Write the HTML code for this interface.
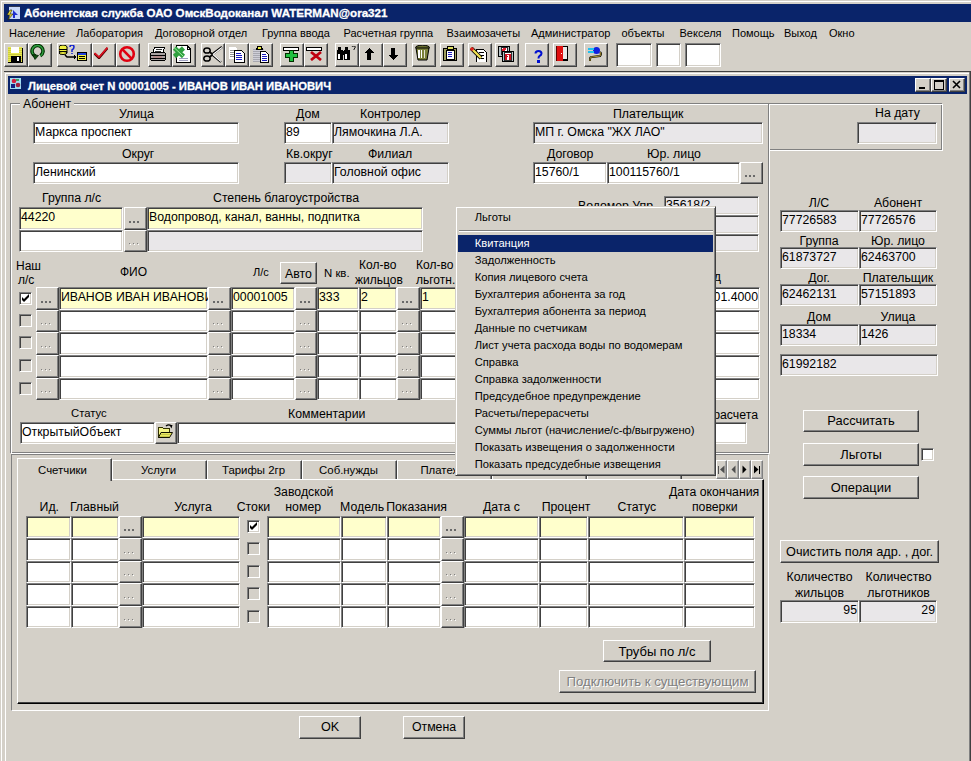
<!DOCTYPE html><html><head><meta charset="utf-8"><style>
html,body{margin:0;padding:0;width:971px;height:761px;overflow:hidden;background:#D4D0C8;position:relative;font-family:"Liberation Sans",sans-serif}
body>div,body>svg{position:absolute;box-sizing:border-box}
.t{white-space:pre;font-family:"Liberation Sans",sans-serif}
.inp{border-style:solid;border-width:1px;border-color:#808080 #fff #fff #808080;box-shadow:inset 1px 1px #404040,inset -1px -1px #D4D0C8}
.btn{background:#D4D0C8;border-style:solid;border-width:1px;border-color:#fff #404040 #404040 #fff;box-shadow:inset -1px -1px #808080}
.tb{background:#D4D0C8;border-style:solid;border-width:1px;border-color:#fff #808080 #808080 #fff}
</style></head><body>

<div style="left:1px;top:1px;width:970px;height:1px;background:#fff;"></div>
<div style="left:1px;top:1px;width:1px;height:760px;background:#fff;"></div>
<div style="left:4px;top:4px;width:967px;height:18px;background:#0A246A;"></div>
<div class="t" style="left:24px;top:7px;font-size:11.6px;line-height:11.6px;color:#fff;font-weight:bold;-webkit-text-stroke:0.3px #fff;">Абонентская служба ОАО ОмскВодоканал WATERMAN@ora321</div>
<div class="t" style="left:9px;top:28px;font-size:11px;line-height:11px;color:#000;">Население</div>
<div class="t" style="left:76px;top:28px;font-size:11px;line-height:11px;color:#000;">Лаборатория</div>
<div class="t" style="left:155px;top:28px;font-size:11px;line-height:11px;color:#000;">Договорной отдел</div>
<div class="t" style="left:262px;top:28px;font-size:11px;line-height:11px;color:#000;">Группа ввода</div>
<div class="t" style="left:343.5px;top:28px;font-size:11px;line-height:11px;color:#000;">Расчетная группа</div>
<div class="t" style="left:446.5px;top:28px;font-size:11px;line-height:11px;color:#000;">Взаимозачеты</div>
<div class="t" style="left:531px;top:28px;font-size:11px;line-height:11px;color:#000;">Администратор</div>
<div class="t" style="left:621.5px;top:28px;font-size:11px;line-height:11px;color:#000;">объекты</div>
<div class="t" style="left:679.5px;top:28px;font-size:11px;line-height:11px;color:#000;">Векселя</div>
<div class="t" style="left:732px;top:28px;font-size:11px;line-height:11px;color:#000;">Помощь</div>
<div class="t" style="left:784px;top:28px;font-size:11px;line-height:11px;color:#000;">Выход</div>
<div class="t" style="left:829px;top:28px;font-size:11px;line-height:11px;color:#000;">Окно</div>
<div class="btn" style="left:4px;top:43px;width:24px;height:24px"></div>
<div class="btn" style="left:28px;top:43px;width:24px;height:24px"></div>
<div class="btn" style="left:57px;top:43px;width:35px;height:24px"></div>
<div class="btn" style="left:92px;top:43px;width:24px;height:24px"></div>
<div class="btn" style="left:116px;top:43px;width:24px;height:24px"></div>
<div class="btn" style="left:148px;top:43px;width:24px;height:24px"></div>
<div class="btn" style="left:172px;top:43px;width:24px;height:24px"></div>
<div class="btn" style="left:201px;top:43px;width:24px;height:24px"></div>
<div class="btn" style="left:225px;top:43px;width:24px;height:24px"></div>
<div class="btn" style="left:249px;top:43px;width:24px;height:24px"></div>
<div class="btn" style="left:280px;top:43px;width:24px;height:24px"></div>
<div class="btn" style="left:304px;top:43px;width:24px;height:24px"></div>
<div class="btn" style="left:335px;top:43px;width:24px;height:24px"></div>
<div class="btn" style="left:359px;top:43px;width:24px;height:24px"></div>
<div class="btn" style="left:383px;top:43px;width:24px;height:24px"></div>
<div class="btn" style="left:412px;top:43px;width:24px;height:24px"></div>
<div class="btn" style="left:440px;top:43px;width:24px;height:24px"></div>
<div class="btn" style="left:468px;top:43px;width:24px;height:24px"></div>
<div class="btn" style="left:495px;top:43px;width:24px;height:24px"></div>
<div class="btn" style="left:525px;top:43px;width:24px;height:24px"></div>
<div class="btn" style="left:553px;top:43px;width:24px;height:24px"></div>
<div class="btn" style="left:584px;top:43px;width:24px;height:24px"></div>
<div class="inp" style="left:616px;top:43px;width:36px;height:24px;background:#fff"></div>
<div class="inp" style="left:656px;top:43px;width:25px;height:24px;background:#fff"></div>
<div class="inp" style="left:685px;top:43px;width:36px;height:24px;background:#fff"></div>
<div style="left:4px;top:71px;width:967px;height:1px;background:#404040;"></div>
<div style="left:5px;top:73px;width:966px;height:1px;background:#fff;"></div>
<div style="left:5px;top:73px;width:1px;height:688px;background:#fff;"></div>
<div style="left:969px;top:72px;width:1px;height:689px;background:#808080;"></div>
<div style="left:970px;top:71px;width:1px;height:690px;background:#404040;"></div>
<div style="left:8px;top:76px;width:959px;height:18px;background:#0A246A;"></div>
<div class="t" style="left:28px;top:81px;font-size:11.3px;line-height:11.3px;color:#fff;font-weight:bold;-webkit-text-stroke:0.3px #fff;">Лицевой счет N 00001005 - ИВАНОВ ИВАН ИВАНОВИЧ</div>
<div class="btn" style="left:915px;top:78px;width:16px;height:14px"></div>
<div class="btn" style="left:931px;top:78px;width:16px;height:14px"></div>
<div class="btn" style="left:949px;top:78px;width:16px;height:14px"></div>
<div style="left:10px;top:103px;width:759px;height:350px;border:1px solid #808080;box-sizing:border-box"></div>
<div style="left:11px;top:104px;width:759px;height:350px;border:1px solid #fff;box-sizing:border-box"></div>
<div style="left:20px;top:100px;width:54px;height:8px;background:#D4D0C8;"></div>
<div class="t" style="left:23px;top:98px;font-size:12.3px;line-height:12.3px;color:#000;">Абонент</div>
<div style="left:768px;top:103px;width:174px;height:47px;border:1px solid #808080;box-sizing:border-box"></div>
<div style="left:769px;top:104px;width:174px;height:47px;border:1px solid #fff;box-sizing:border-box"></div>
<div class="t" style="left:875px;top:107px;font-size:12.3px;line-height:12.3px;color:#000;">На дату</div>
<div class="inp" style="left:857px;top:122px;width:80px;height:22px;background:#E9E7E9"></div>
<div class="t" style="left:119px;top:108px;font-size:12.3px;line-height:12.3px;color:#000;">Улица</div>
<div class="t" style="left:296px;top:108px;font-size:12.3px;line-height:12.3px;color:#000;">Дом</div>
<div class="t" style="left:360px;top:108px;font-size:12.3px;line-height:12.3px;color:#000;">Контролер</div>
<div class="t" style="left:613px;top:108px;font-size:12.3px;line-height:12.3px;color:#000;">Плательщик</div>
<div class="inp" style="left:33px;top:122px;width:206px;height:22px;background:#fff"></div>
<div class="t" style="left:35px;top:126px;font-size:12.3px;line-height:12.3px;color:#000;">Маркса проспект</div>
<div class="inp" style="left:284px;top:122px;width:48px;height:22px;background:#fff"></div>
<div class="t" style="left:286px;top:126px;font-size:12.3px;line-height:12.3px;color:#000;">89</div>
<div class="inp" style="left:332px;top:122px;width:117px;height:22px;background:#E9E7E9"></div>
<div class="t" style="left:334px;top:126px;font-size:12.3px;line-height:12.3px;color:#000;">Лямочкина Л.А.</div>
<div class="inp" style="left:533px;top:122px;width:230px;height:22px;background:#E9E7E9"></div>
<div class="t" style="left:535px;top:126px;font-size:12.3px;line-height:12.3px;color:#000;">МП г. Омска "ЖХ ЛАО"</div>
<div class="t" style="left:122px;top:148px;font-size:12.3px;line-height:12.3px;color:#000;">Округ</div>
<div class="t" style="left:286px;top:148px;font-size:12.3px;line-height:12.3px;color:#000;">Кв.округ</div>
<div class="t" style="left:368px;top:148px;font-size:12.3px;line-height:12.3px;color:#000;">Филиал</div>
<div class="t" style="left:547px;top:148px;font-size:12.3px;line-height:12.3px;color:#000;">Договор</div>
<div class="t" style="left:647px;top:148px;font-size:12.3px;line-height:12.3px;color:#000;">Юр. лицо</div>
<div class="inp" style="left:33px;top:162px;width:206px;height:22px;background:#fff"></div>
<div class="t" style="left:35px;top:166px;font-size:12.3px;line-height:12.3px;color:#000;">Ленинский</div>
<div class="inp" style="left:284px;top:162px;width:48px;height:22px;background:#E9E7E9"></div>
<div class="inp" style="left:332px;top:162px;width:117px;height:22px;background:#E9E7E9"></div>
<div class="t" style="left:334px;top:166px;font-size:12.3px;line-height:12.3px;color:#000;">Головной офис</div>
<div class="inp" style="left:533px;top:162px;width:74px;height:22px;background:#fff"></div>
<div class="t" style="left:535px;top:166px;font-size:12.3px;line-height:12.3px;color:#000;">15760/1</div>
<div class="inp" style="left:607px;top:162px;width:133px;height:22px;background:#fff"></div>
<div class="t" style="left:609px;top:166px;font-size:12.3px;line-height:12.3px;color:#000;">100115760/1</div>
<div class="btn" style="left:740px;top:162px;width:23px;height:22px"></div>
<div style="left:745px;top:175px;width:2px;height:2px;background:#6a6a6a;"></div>
<div style="left:749px;top:175px;width:2px;height:2px;background:#6a6a6a;"></div>
<div style="left:753px;top:175px;width:2px;height:2px;background:#6a6a6a;"></div>
<div class="t" style="left:42px;top:192px;font-size:12.3px;line-height:12.3px;color:#000;">Группа л/с</div>
<div class="t" style="left:213px;top:192px;font-size:12.3px;line-height:12.3px;color:#000;">Степень благоустройства</div>
<div class="t" style="left:578px;top:200px;font-size:12.3px;line-height:12.3px;color:#000;">Водомер Упр</div>
<div class="inp" style="left:19px;top:207px;width:104px;height:23px;background:#FFFFCC"></div>
<div class="t" style="left:21px;top:211px;font-size:12.3px;line-height:12.3px;color:#000;">44220</div>
<div class="btn" style="left:124px;top:207px;width:23px;height:23px"></div>
<div style="left:129px;top:221px;width:2px;height:2px;background:#6a6a6a;"></div>
<div style="left:133px;top:221px;width:2px;height:2px;background:#6a6a6a;"></div>
<div style="left:137px;top:221px;width:2px;height:2px;background:#6a6a6a;"></div>
<div class="inp" style="left:147px;top:207px;width:276px;height:23px;background:#FFFFCC"></div>
<div class="t" style="left:149px;top:211px;font-size:12.3px;line-height:12.3px;color:#000;">Водопровод, канал, ванны, подпитка</div>
<div class="inp" style="left:19px;top:230px;width:104px;height:22px;background:#fff"></div>
<div class="btn" style="left:124px;top:230px;width:23px;height:22px"></div>
<div style="left:130px;top:244px;width:1px;height:1px;background:#fff;"></div>
<div style="left:129px;top:243px;width:1px;height:1px;background:#808080;"></div>
<div style="left:134px;top:244px;width:1px;height:1px;background:#fff;"></div>
<div style="left:133px;top:243px;width:1px;height:1px;background:#808080;"></div>
<div style="left:138px;top:244px;width:1px;height:1px;background:#fff;"></div>
<div style="left:137px;top:243px;width:1px;height:1px;background:#808080;"></div>
<div class="inp" style="left:147px;top:230px;width:276px;height:22px;background:#E9E7E9"></div>
<div class="inp" style="left:664px;top:196px;width:95px;height:19px;background:#E9E7E9"></div>
<div class="t" style="left:666px;top:199px;font-size:12.3px;line-height:12.3px;color:#000;">35618/2</div>
<div class="inp" style="left:664px;top:215px;width:95px;height:19px;background:#E9E7E9"></div>
<div class="inp" style="left:664px;top:234px;width:95px;height:18px;background:#E9E7E9"></div>
<div class="t" style="left:16px;top:260px;font-size:12px;line-height:12px;color:#000;">Наш</div>
<div class="t" style="left:18px;top:274px;font-size:12px;line-height:12px;color:#000;">л/с</div>
<div class="t" style="left:120px;top:266px;font-size:12px;line-height:12px;color:#000;">ФИО</div>
<div class="t" style="left:253px;top:267px;font-size:11px;line-height:11px;color:#000;">Л/с</div>
<div class="btn" style="left:280px;top:262px;width:37px;height:22px"></div>
<div class="t" style="left:280px;top:268px;font-size:12.3px;line-height:12.3px;color:#000;width:37px;text-align:center;">Авто</div>
<div class="t" style="left:324px;top:268px;font-size:11.4px;line-height:11.4px;color:#000;">N кв.</div>
<div class="t" style="left:359px;top:259px;font-size:12px;line-height:12px;color:#000;">Кол-во</div>
<div class="t" style="left:355px;top:274px;font-size:12px;line-height:12px;color:#000;">жильцов</div>
<div class="t" style="left:416px;top:259px;font-size:12px;line-height:12px;color:#000;">Кол-во</div>
<div class="t" style="left:416px;top:274px;font-size:12px;line-height:12px;color:#000;">льготн.</div>
<div class="t" style="left:621px;top:271px;font-size:12.3px;line-height:12.3px;color:#000;width:100px;text-align:right;">Дата ввод</div>
<div class="inp" style="left:19px;top:292px;width:13px;height:13px;background:#fff"></div>
<svg style="position:absolute;left:19px;top:292px" width="13" height="13"><path d="M3 5v3l2 2 5-5v-3l-5 5z" fill="#000"/></svg>
<div class="btn" style="left:36px;top:287px;width:23px;height:23px"></div>
<div style="left:41px;top:301px;width:2px;height:2px;background:#6a6a6a;"></div>
<div style="left:45px;top:301px;width:2px;height:2px;background:#6a6a6a;"></div>
<div style="left:49px;top:301px;width:2px;height:2px;background:#6a6a6a;"></div>
<div class="inp" style="left:59px;top:287px;width:149px;height:23px;background:#FFFFCC"></div>
<div class="t" style="left:61px;top:291px;font-size:12.3px;line-height:12.3px;color:#000;">ИВАНОВ ИВАН ИВАНОВИЧ</div>
<div class="btn" style="left:208px;top:287px;width:23px;height:23px"></div>
<div style="left:213px;top:301px;width:2px;height:2px;background:#6a6a6a;"></div>
<div style="left:217px;top:301px;width:2px;height:2px;background:#6a6a6a;"></div>
<div style="left:221px;top:301px;width:2px;height:2px;background:#6a6a6a;"></div>
<div class="inp" style="left:231px;top:287px;width:64px;height:23px;background:#FFFFCC"></div>
<div class="t" style="left:233px;top:291px;font-size:12.3px;line-height:12.3px;color:#000;">00001005</div>
<div class="btn" style="left:295px;top:287px;width:22px;height:23px"></div>
<div style="left:300px;top:301px;width:2px;height:2px;background:#6a6a6a;"></div>
<div style="left:304px;top:301px;width:2px;height:2px;background:#6a6a6a;"></div>
<div style="left:308px;top:301px;width:2px;height:2px;background:#6a6a6a;"></div>
<div class="inp" style="left:317px;top:287px;width:42px;height:23px;background:#FFFFCC"></div>
<div class="t" style="left:319px;top:291px;font-size:12.3px;line-height:12.3px;color:#000;">333</div>
<div class="inp" style="left:359px;top:287px;width:38px;height:23px;background:#FFFFCC"></div>
<div class="t" style="left:361px;top:291px;font-size:12.3px;line-height:12.3px;color:#000;">2</div>
<div class="btn" style="left:397px;top:287px;width:23px;height:23px"></div>
<div style="left:402px;top:301px;width:2px;height:2px;background:#6a6a6a;"></div>
<div style="left:406px;top:301px;width:2px;height:2px;background:#6a6a6a;"></div>
<div style="left:410px;top:301px;width:2px;height:2px;background:#6a6a6a;"></div>
<div class="inp" style="left:420px;top:287px;width:60px;height:23px;background:#FFFFCC"></div>
<div class="t" style="left:422px;top:291px;font-size:12.3px;line-height:12.3px;color:#000;">1</div>
<div class="inp" style="left:680px;top:287px;width:80px;height:23px;background:#fff"></div>
<div class="t" style="left:680px;top:291px;font-size:12.3px;line-height:12.3px;color:#000;width:78px;text-align:right;">01.4000</div>
<div class="inp" style="left:19px;top:314px;width:13px;height:13px;background:#D4D0C8"></div>
<div class="btn" style="left:36px;top:310px;width:23px;height:22px"></div>
<div style="left:42px;top:324px;width:1px;height:1px;background:#fff;"></div>
<div style="left:41px;top:323px;width:1px;height:1px;background:#808080;"></div>
<div style="left:46px;top:324px;width:1px;height:1px;background:#fff;"></div>
<div style="left:45px;top:323px;width:1px;height:1px;background:#808080;"></div>
<div style="left:50px;top:324px;width:1px;height:1px;background:#fff;"></div>
<div style="left:49px;top:323px;width:1px;height:1px;background:#808080;"></div>
<div class="inp" style="left:59px;top:310px;width:149px;height:22px;background:#fff"></div>
<div class="btn" style="left:208px;top:310px;width:23px;height:22px"></div>
<div style="left:214px;top:324px;width:1px;height:1px;background:#fff;"></div>
<div style="left:213px;top:323px;width:1px;height:1px;background:#808080;"></div>
<div style="left:218px;top:324px;width:1px;height:1px;background:#fff;"></div>
<div style="left:217px;top:323px;width:1px;height:1px;background:#808080;"></div>
<div style="left:222px;top:324px;width:1px;height:1px;background:#fff;"></div>
<div style="left:221px;top:323px;width:1px;height:1px;background:#808080;"></div>
<div class="inp" style="left:231px;top:310px;width:64px;height:22px;background:#fff"></div>
<div class="btn" style="left:295px;top:310px;width:22px;height:22px"></div>
<div style="left:301px;top:324px;width:1px;height:1px;background:#fff;"></div>
<div style="left:300px;top:323px;width:1px;height:1px;background:#808080;"></div>
<div style="left:305px;top:324px;width:1px;height:1px;background:#fff;"></div>
<div style="left:304px;top:323px;width:1px;height:1px;background:#808080;"></div>
<div style="left:309px;top:324px;width:1px;height:1px;background:#fff;"></div>
<div style="left:308px;top:323px;width:1px;height:1px;background:#808080;"></div>
<div class="inp" style="left:317px;top:310px;width:42px;height:22px;background:#fff"></div>
<div class="inp" style="left:359px;top:310px;width:38px;height:22px;background:#fff"></div>
<div class="btn" style="left:397px;top:310px;width:23px;height:22px"></div>
<div style="left:403px;top:324px;width:1px;height:1px;background:#fff;"></div>
<div style="left:402px;top:323px;width:1px;height:1px;background:#808080;"></div>
<div style="left:407px;top:324px;width:1px;height:1px;background:#fff;"></div>
<div style="left:406px;top:323px;width:1px;height:1px;background:#808080;"></div>
<div style="left:411px;top:324px;width:1px;height:1px;background:#fff;"></div>
<div style="left:410px;top:323px;width:1px;height:1px;background:#808080;"></div>
<div class="inp" style="left:420px;top:310px;width:60px;height:22px;background:#fff"></div>
<div class="inp" style="left:680px;top:310px;width:80px;height:22px;background:#fff"></div>
<div class="inp" style="left:19px;top:336px;width:13px;height:13px;background:#D4D0C8"></div>
<div class="btn" style="left:36px;top:332px;width:23px;height:23px"></div>
<div style="left:42px;top:347px;width:1px;height:1px;background:#fff;"></div>
<div style="left:41px;top:346px;width:1px;height:1px;background:#808080;"></div>
<div style="left:46px;top:347px;width:1px;height:1px;background:#fff;"></div>
<div style="left:45px;top:346px;width:1px;height:1px;background:#808080;"></div>
<div style="left:50px;top:347px;width:1px;height:1px;background:#fff;"></div>
<div style="left:49px;top:346px;width:1px;height:1px;background:#808080;"></div>
<div class="inp" style="left:59px;top:332px;width:149px;height:23px;background:#fff"></div>
<div class="btn" style="left:208px;top:332px;width:23px;height:23px"></div>
<div style="left:214px;top:347px;width:1px;height:1px;background:#fff;"></div>
<div style="left:213px;top:346px;width:1px;height:1px;background:#808080;"></div>
<div style="left:218px;top:347px;width:1px;height:1px;background:#fff;"></div>
<div style="left:217px;top:346px;width:1px;height:1px;background:#808080;"></div>
<div style="left:222px;top:347px;width:1px;height:1px;background:#fff;"></div>
<div style="left:221px;top:346px;width:1px;height:1px;background:#808080;"></div>
<div class="inp" style="left:231px;top:332px;width:64px;height:23px;background:#fff"></div>
<div class="btn" style="left:295px;top:332px;width:22px;height:23px"></div>
<div style="left:301px;top:347px;width:1px;height:1px;background:#fff;"></div>
<div style="left:300px;top:346px;width:1px;height:1px;background:#808080;"></div>
<div style="left:305px;top:347px;width:1px;height:1px;background:#fff;"></div>
<div style="left:304px;top:346px;width:1px;height:1px;background:#808080;"></div>
<div style="left:309px;top:347px;width:1px;height:1px;background:#fff;"></div>
<div style="left:308px;top:346px;width:1px;height:1px;background:#808080;"></div>
<div class="inp" style="left:317px;top:332px;width:42px;height:23px;background:#fff"></div>
<div class="inp" style="left:359px;top:332px;width:38px;height:23px;background:#fff"></div>
<div class="btn" style="left:397px;top:332px;width:23px;height:23px"></div>
<div style="left:403px;top:347px;width:1px;height:1px;background:#fff;"></div>
<div style="left:402px;top:346px;width:1px;height:1px;background:#808080;"></div>
<div style="left:407px;top:347px;width:1px;height:1px;background:#fff;"></div>
<div style="left:406px;top:346px;width:1px;height:1px;background:#808080;"></div>
<div style="left:411px;top:347px;width:1px;height:1px;background:#fff;"></div>
<div style="left:410px;top:346px;width:1px;height:1px;background:#808080;"></div>
<div class="inp" style="left:420px;top:332px;width:60px;height:23px;background:#fff"></div>
<div class="inp" style="left:680px;top:332px;width:80px;height:23px;background:#fff"></div>
<div class="inp" style="left:19px;top:359px;width:13px;height:13px;background:#D4D0C8"></div>
<div class="btn" style="left:36px;top:355px;width:23px;height:23px"></div>
<div style="left:42px;top:370px;width:1px;height:1px;background:#fff;"></div>
<div style="left:41px;top:369px;width:1px;height:1px;background:#808080;"></div>
<div style="left:46px;top:370px;width:1px;height:1px;background:#fff;"></div>
<div style="left:45px;top:369px;width:1px;height:1px;background:#808080;"></div>
<div style="left:50px;top:370px;width:1px;height:1px;background:#fff;"></div>
<div style="left:49px;top:369px;width:1px;height:1px;background:#808080;"></div>
<div class="inp" style="left:59px;top:355px;width:149px;height:23px;background:#fff"></div>
<div class="btn" style="left:208px;top:355px;width:23px;height:23px"></div>
<div style="left:214px;top:370px;width:1px;height:1px;background:#fff;"></div>
<div style="left:213px;top:369px;width:1px;height:1px;background:#808080;"></div>
<div style="left:218px;top:370px;width:1px;height:1px;background:#fff;"></div>
<div style="left:217px;top:369px;width:1px;height:1px;background:#808080;"></div>
<div style="left:222px;top:370px;width:1px;height:1px;background:#fff;"></div>
<div style="left:221px;top:369px;width:1px;height:1px;background:#808080;"></div>
<div class="inp" style="left:231px;top:355px;width:64px;height:23px;background:#fff"></div>
<div class="btn" style="left:295px;top:355px;width:22px;height:23px"></div>
<div style="left:301px;top:370px;width:1px;height:1px;background:#fff;"></div>
<div style="left:300px;top:369px;width:1px;height:1px;background:#808080;"></div>
<div style="left:305px;top:370px;width:1px;height:1px;background:#fff;"></div>
<div style="left:304px;top:369px;width:1px;height:1px;background:#808080;"></div>
<div style="left:309px;top:370px;width:1px;height:1px;background:#fff;"></div>
<div style="left:308px;top:369px;width:1px;height:1px;background:#808080;"></div>
<div class="inp" style="left:317px;top:355px;width:42px;height:23px;background:#fff"></div>
<div class="inp" style="left:359px;top:355px;width:38px;height:23px;background:#fff"></div>
<div class="btn" style="left:397px;top:355px;width:23px;height:23px"></div>
<div style="left:403px;top:370px;width:1px;height:1px;background:#fff;"></div>
<div style="left:402px;top:369px;width:1px;height:1px;background:#808080;"></div>
<div style="left:407px;top:370px;width:1px;height:1px;background:#fff;"></div>
<div style="left:406px;top:369px;width:1px;height:1px;background:#808080;"></div>
<div style="left:411px;top:370px;width:1px;height:1px;background:#fff;"></div>
<div style="left:410px;top:369px;width:1px;height:1px;background:#808080;"></div>
<div class="inp" style="left:420px;top:355px;width:60px;height:23px;background:#fff"></div>
<div class="inp" style="left:680px;top:355px;width:80px;height:23px;background:#fff"></div>
<div class="inp" style="left:19px;top:382px;width:13px;height:13px;background:#D4D0C8"></div>
<div class="btn" style="left:36px;top:378px;width:23px;height:22px"></div>
<div style="left:42px;top:392px;width:1px;height:1px;background:#fff;"></div>
<div style="left:41px;top:391px;width:1px;height:1px;background:#808080;"></div>
<div style="left:46px;top:392px;width:1px;height:1px;background:#fff;"></div>
<div style="left:45px;top:391px;width:1px;height:1px;background:#808080;"></div>
<div style="left:50px;top:392px;width:1px;height:1px;background:#fff;"></div>
<div style="left:49px;top:391px;width:1px;height:1px;background:#808080;"></div>
<div class="inp" style="left:59px;top:378px;width:149px;height:22px;background:#fff"></div>
<div class="btn" style="left:208px;top:378px;width:23px;height:22px"></div>
<div style="left:214px;top:392px;width:1px;height:1px;background:#fff;"></div>
<div style="left:213px;top:391px;width:1px;height:1px;background:#808080;"></div>
<div style="left:218px;top:392px;width:1px;height:1px;background:#fff;"></div>
<div style="left:217px;top:391px;width:1px;height:1px;background:#808080;"></div>
<div style="left:222px;top:392px;width:1px;height:1px;background:#fff;"></div>
<div style="left:221px;top:391px;width:1px;height:1px;background:#808080;"></div>
<div class="inp" style="left:231px;top:378px;width:64px;height:22px;background:#fff"></div>
<div class="btn" style="left:295px;top:378px;width:22px;height:22px"></div>
<div style="left:301px;top:392px;width:1px;height:1px;background:#fff;"></div>
<div style="left:300px;top:391px;width:1px;height:1px;background:#808080;"></div>
<div style="left:305px;top:392px;width:1px;height:1px;background:#fff;"></div>
<div style="left:304px;top:391px;width:1px;height:1px;background:#808080;"></div>
<div style="left:309px;top:392px;width:1px;height:1px;background:#fff;"></div>
<div style="left:308px;top:391px;width:1px;height:1px;background:#808080;"></div>
<div class="inp" style="left:317px;top:378px;width:42px;height:22px;background:#fff"></div>
<div class="inp" style="left:359px;top:378px;width:38px;height:22px;background:#fff"></div>
<div class="btn" style="left:397px;top:378px;width:23px;height:22px"></div>
<div style="left:403px;top:392px;width:1px;height:1px;background:#fff;"></div>
<div style="left:402px;top:391px;width:1px;height:1px;background:#808080;"></div>
<div style="left:407px;top:392px;width:1px;height:1px;background:#fff;"></div>
<div style="left:406px;top:391px;width:1px;height:1px;background:#808080;"></div>
<div style="left:411px;top:392px;width:1px;height:1px;background:#fff;"></div>
<div style="left:410px;top:391px;width:1px;height:1px;background:#808080;"></div>
<div class="inp" style="left:420px;top:378px;width:60px;height:22px;background:#fff"></div>
<div class="inp" style="left:680px;top:378px;width:80px;height:22px;background:#fff"></div>
<div class="t" style="left:71px;top:408px;font-size:11.3px;line-height:11.3px;color:#000;">Статус</div>
<div class="t" style="left:288px;top:408px;font-size:12.3px;line-height:12.3px;color:#000;">Комментарии</div>
<div class="t" style="left:608px;top:409px;font-size:12.3px;line-height:12.3px;color:#000;width:150px;text-align:right;">Дата расчета</div>
<div class="inp" style="left:20px;top:422px;width:135px;height:22px;background:#fff"></div>
<div class="t" style="left:22px;top:426px;font-size:12.3px;line-height:12.3px;color:#000;">ОткрытыйОбъект</div>
<div class="btn" style="left:155px;top:422px;width:22px;height:22px"></div>
<div class="inp" style="left:177px;top:422px;width:500px;height:22px;background:#fff"></div>
<div class="inp" style="left:680px;top:422px;width:67px;height:22px;background:#fff"></div>
<div style="left:11px;top:454px;width:758px;height:257px;border-style:solid;border-width:1px;border-color:#808080 #fff #fff #808080"></div>
<div style="left:112px;top:460px;width:95px;height:20px;background:#D4D0C8;border-style:solid;border-width:1px 1px 0 1px;border-color:#fff #404040 transparent #fff;box-shadow:inset -1px 0 #808080"></div>
<div class="t" style="left:111px;top:465px;font-size:11.4px;line-height:11.4px;color:#000;width:95px;text-align:center;">Услуги</div>
<div style="left:207px;top:460px;width:95px;height:20px;background:#D4D0C8;border-style:solid;border-width:1px 1px 0 1px;border-color:#fff #404040 transparent #fff;box-shadow:inset -1px 0 #808080"></div>
<div class="t" style="left:206px;top:465px;font-size:11.4px;line-height:11.4px;color:#000;width:95px;text-align:center;">Тарифы 2гр</div>
<div style="left:302px;top:460px;width:95px;height:20px;background:#D4D0C8;border-style:solid;border-width:1px 1px 0 1px;border-color:#fff #404040 transparent #fff;box-shadow:inset -1px 0 #808080"></div>
<div class="t" style="left:301px;top:465px;font-size:11.4px;line-height:11.4px;color:#000;width:95px;text-align:center;">Соб.нужды</div>
<div style="left:397px;top:460px;width:95px;height:20px;background:#D4D0C8;border-style:solid;border-width:1px 1px 0 1px;border-color:#fff #404040 transparent #fff;box-shadow:inset -1px 0 #808080"></div>
<div class="t" style="left:396px;top:465px;font-size:11.4px;line-height:11.4px;color:#000;width:95px;text-align:center;">Платежи</div>
<div style="left:492px;top:460px;width:95px;height:20px;background:#D4D0C8;border-style:solid;border-width:1px 1px 0 1px;border-color:#fff #404040 transparent #fff;box-shadow:inset -1px 0 #808080"></div>
<div class="t" style="left:491px;top:465px;font-size:11.4px;line-height:11.4px;color:#000;width:95px;text-align:center;">Пени</div>
<div style="left:587px;top:460px;width:95px;height:20px;background:#D4D0C8;border-style:solid;border-width:1px 1px 0 1px;border-color:#fff #404040 transparent #fff;box-shadow:inset -1px 0 #808080"></div>
<div class="t" style="left:586px;top:465px;font-size:11.4px;line-height:11.4px;color:#000;width:95px;text-align:center;">Лимиты</div>
<div style="left:17px;top:479px;width:747px;height:225px;background:#D4D0C8;border-style:solid;border-width:1px;border-color:#fff #000 #000 #fff;box-shadow:inset -1px -1px #404040"></div>
<div style="left:17px;top:458px;width:95px;height:23px;background:#D4D0C8;border-style:solid;border-width:1px 1px 0 1px;border-color:#fff #404040 transparent #fff;box-shadow:inset -1px 0 #808080"></div>
<div class="t" style="left:16px;top:465px;font-size:11.4px;line-height:11.4px;color:#000;width:93px;text-align:center;">Счетчики</div>
<div style="left:716px;top:460px;width:11px;height:19px;background:#D4D0C8;border-style:solid;border-width:1px;border-color:#fff #808080 #808080 #fff;box-shadow:inset -1px -1px #a8a8a8"></div>
<div style="left:727px;top:460px;width:12px;height:19px;background:#D4D0C8;border-style:solid;border-width:1px;border-color:#fff #808080 #808080 #fff;box-shadow:inset -1px -1px #a8a8a8"></div>
<div style="left:739px;top:460px;width:12px;height:19px;background:#D4D0C8;border-style:solid;border-width:1px;border-color:#fff #808080 #808080 #fff;box-shadow:inset -1px -1px #a8a8a8"></div>
<div style="left:751px;top:460px;width:12px;height:19px;background:#D4D0C8;border-style:solid;border-width:1px;border-color:#fff #808080 #808080 #fff;box-shadow:inset -1px -1px #a8a8a8"></div>
<div class="t" style="left:273.7px;top:486px;font-size:12.3px;line-height:12.3px;color:#000;">Заводской</div>
<div class="t" style="left:285.3px;top:501px;font-size:12.3px;line-height:12.3px;color:#000;">номер</div>
<div class="t" style="left:669px;top:486px;font-size:12.3px;line-height:12.3px;color:#000;">Дата окончания</div>
<div class="t" style="left:39.6px;top:501px;font-size:12.3px;line-height:12.3px;color:#000;">Ид.</div>
<div class="t" style="left:69.9px;top:501px;font-size:12.3px;line-height:12.3px;color:#000;">Главный</div>
<div class="t" style="left:174.3px;top:501px;font-size:12.3px;line-height:12.3px;color:#000;">Услуга</div>
<div class="t" style="left:236.7px;top:501px;font-size:12.3px;line-height:12.3px;color:#000;">Стоки</div>
<div class="t" style="left:340px;top:501px;font-size:12.3px;line-height:12.3px;color:#000;">Модель</div>
<div class="t" style="left:386.2px;top:501px;font-size:12.3px;line-height:12.3px;color:#000;">Показания</div>
<div class="t" style="left:483px;top:501px;font-size:12.3px;line-height:12.3px;color:#000;">Дата с</div>
<div class="t" style="left:541.7px;top:501px;font-size:12.3px;line-height:12.3px;color:#000;">Процент</div>
<div class="t" style="left:617.4px;top:501px;font-size:12.3px;line-height:12.3px;color:#000;">Статус</div>
<div class="t" style="left:691.9px;top:501px;font-size:12.3px;line-height:12.3px;color:#000;">поверки</div>
<div class="inp" style="left:26px;top:516px;width:45px;height:22px;background:#FFFFCC"></div>
<div class="inp" style="left:71px;top:516px;width:48px;height:22px;background:#FFFFCC"></div>
<div class="btn" style="left:119px;top:516px;width:23px;height:22px"></div>
<div style="left:124px;top:529px;width:2px;height:2px;background:#6a6a6a;"></div>
<div style="left:128px;top:529px;width:2px;height:2px;background:#6a6a6a;"></div>
<div style="left:132px;top:529px;width:2px;height:2px;background:#6a6a6a;"></div>
<div class="inp" style="left:142px;top:516px;width:98px;height:22px;background:#FFFFCC"></div>
<div class="inp" style="left:247px;top:520px;width:13px;height:13px;background:#fff"></div>
<svg style="position:absolute;left:247px;top:520px" width="13" height="13"><path d="M3 5v3l2 2 5-5v-3l-5 5z" fill="#000"/></svg>
<div class="inp" style="left:267px;top:516px;width:74px;height:22px;background:#FFFFCC"></div>
<div class="inp" style="left:341px;top:516px;width:46px;height:22px;background:#FFFFCC"></div>
<div class="inp" style="left:387px;top:516px;width:54px;height:22px;background:#FFFFCC"></div>
<div class="btn" style="left:441px;top:516px;width:23px;height:22px"></div>
<div style="left:446px;top:529px;width:2px;height:2px;background:#6a6a6a;"></div>
<div style="left:450px;top:529px;width:2px;height:2px;background:#6a6a6a;"></div>
<div style="left:454px;top:529px;width:2px;height:2px;background:#6a6a6a;"></div>
<div class="inp" style="left:464px;top:516px;width:75px;height:22px;background:#FFFFCC"></div>
<div class="inp" style="left:539px;top:516px;width:49px;height:22px;background:#FFFFCC"></div>
<div class="inp" style="left:588px;top:516px;width:96px;height:22px;background:#FFFFCC"></div>
<div class="inp" style="left:684px;top:516px;width:71px;height:22px;background:#FFFFCC"></div>
<div class="inp" style="left:26px;top:538px;width:45px;height:23px;background:#fff"></div>
<div class="inp" style="left:71px;top:538px;width:48px;height:23px;background:#fff"></div>
<div class="btn" style="left:119px;top:538px;width:23px;height:23px"></div>
<div style="left:125px;top:553px;width:1px;height:1px;background:#fff;"></div>
<div style="left:124px;top:552px;width:1px;height:1px;background:#808080;"></div>
<div style="left:129px;top:553px;width:1px;height:1px;background:#fff;"></div>
<div style="left:128px;top:552px;width:1px;height:1px;background:#808080;"></div>
<div style="left:133px;top:553px;width:1px;height:1px;background:#fff;"></div>
<div style="left:132px;top:552px;width:1px;height:1px;background:#808080;"></div>
<div class="inp" style="left:142px;top:538px;width:98px;height:23px;background:#fff"></div>
<div class="inp" style="left:247px;top:542px;width:13px;height:13px;background:#D4D0C8"></div>
<div class="inp" style="left:267px;top:538px;width:74px;height:23px;background:#fff"></div>
<div class="inp" style="left:341px;top:538px;width:46px;height:23px;background:#fff"></div>
<div class="inp" style="left:387px;top:538px;width:54px;height:23px;background:#fff"></div>
<div class="btn" style="left:441px;top:538px;width:23px;height:23px"></div>
<div style="left:447px;top:553px;width:1px;height:1px;background:#fff;"></div>
<div style="left:446px;top:552px;width:1px;height:1px;background:#808080;"></div>
<div style="left:451px;top:553px;width:1px;height:1px;background:#fff;"></div>
<div style="left:450px;top:552px;width:1px;height:1px;background:#808080;"></div>
<div style="left:455px;top:553px;width:1px;height:1px;background:#fff;"></div>
<div style="left:454px;top:552px;width:1px;height:1px;background:#808080;"></div>
<div class="inp" style="left:464px;top:538px;width:75px;height:23px;background:#fff"></div>
<div class="inp" style="left:539px;top:538px;width:49px;height:23px;background:#fff"></div>
<div class="inp" style="left:588px;top:538px;width:96px;height:23px;background:#fff"></div>
<div class="inp" style="left:684px;top:538px;width:71px;height:23px;background:#fff"></div>
<div class="inp" style="left:26px;top:561px;width:45px;height:22px;background:#fff"></div>
<div class="inp" style="left:71px;top:561px;width:48px;height:22px;background:#fff"></div>
<div class="btn" style="left:119px;top:561px;width:23px;height:22px"></div>
<div style="left:125px;top:575px;width:1px;height:1px;background:#fff;"></div>
<div style="left:124px;top:574px;width:1px;height:1px;background:#808080;"></div>
<div style="left:129px;top:575px;width:1px;height:1px;background:#fff;"></div>
<div style="left:128px;top:574px;width:1px;height:1px;background:#808080;"></div>
<div style="left:133px;top:575px;width:1px;height:1px;background:#fff;"></div>
<div style="left:132px;top:574px;width:1px;height:1px;background:#808080;"></div>
<div class="inp" style="left:142px;top:561px;width:98px;height:22px;background:#fff"></div>
<div class="inp" style="left:247px;top:565px;width:13px;height:13px;background:#D4D0C8"></div>
<div class="inp" style="left:267px;top:561px;width:74px;height:22px;background:#fff"></div>
<div class="inp" style="left:341px;top:561px;width:46px;height:22px;background:#fff"></div>
<div class="inp" style="left:387px;top:561px;width:54px;height:22px;background:#fff"></div>
<div class="btn" style="left:441px;top:561px;width:23px;height:22px"></div>
<div style="left:447px;top:575px;width:1px;height:1px;background:#fff;"></div>
<div style="left:446px;top:574px;width:1px;height:1px;background:#808080;"></div>
<div style="left:451px;top:575px;width:1px;height:1px;background:#fff;"></div>
<div style="left:450px;top:574px;width:1px;height:1px;background:#808080;"></div>
<div style="left:455px;top:575px;width:1px;height:1px;background:#fff;"></div>
<div style="left:454px;top:574px;width:1px;height:1px;background:#808080;"></div>
<div class="inp" style="left:464px;top:561px;width:75px;height:22px;background:#fff"></div>
<div class="inp" style="left:539px;top:561px;width:49px;height:22px;background:#fff"></div>
<div class="inp" style="left:588px;top:561px;width:96px;height:22px;background:#fff"></div>
<div class="inp" style="left:684px;top:561px;width:71px;height:22px;background:#fff"></div>
<div class="inp" style="left:26px;top:583px;width:45px;height:23px;background:#fff"></div>
<div class="inp" style="left:71px;top:583px;width:48px;height:23px;background:#fff"></div>
<div class="btn" style="left:119px;top:583px;width:23px;height:23px"></div>
<div style="left:125px;top:598px;width:1px;height:1px;background:#fff;"></div>
<div style="left:124px;top:597px;width:1px;height:1px;background:#808080;"></div>
<div style="left:129px;top:598px;width:1px;height:1px;background:#fff;"></div>
<div style="left:128px;top:597px;width:1px;height:1px;background:#808080;"></div>
<div style="left:133px;top:598px;width:1px;height:1px;background:#fff;"></div>
<div style="left:132px;top:597px;width:1px;height:1px;background:#808080;"></div>
<div class="inp" style="left:142px;top:583px;width:98px;height:23px;background:#fff"></div>
<div class="inp" style="left:247px;top:587px;width:13px;height:13px;background:#D4D0C8"></div>
<div class="inp" style="left:267px;top:583px;width:74px;height:23px;background:#fff"></div>
<div class="inp" style="left:341px;top:583px;width:46px;height:23px;background:#fff"></div>
<div class="inp" style="left:387px;top:583px;width:54px;height:23px;background:#fff"></div>
<div class="btn" style="left:441px;top:583px;width:23px;height:23px"></div>
<div style="left:447px;top:598px;width:1px;height:1px;background:#fff;"></div>
<div style="left:446px;top:597px;width:1px;height:1px;background:#808080;"></div>
<div style="left:451px;top:598px;width:1px;height:1px;background:#fff;"></div>
<div style="left:450px;top:597px;width:1px;height:1px;background:#808080;"></div>
<div style="left:455px;top:598px;width:1px;height:1px;background:#fff;"></div>
<div style="left:454px;top:597px;width:1px;height:1px;background:#808080;"></div>
<div class="inp" style="left:464px;top:583px;width:75px;height:23px;background:#fff"></div>
<div class="inp" style="left:539px;top:583px;width:49px;height:23px;background:#fff"></div>
<div class="inp" style="left:588px;top:583px;width:96px;height:23px;background:#fff"></div>
<div class="inp" style="left:684px;top:583px;width:71px;height:23px;background:#fff"></div>
<div class="inp" style="left:26px;top:606px;width:45px;height:22px;background:#fff"></div>
<div class="inp" style="left:71px;top:606px;width:48px;height:22px;background:#fff"></div>
<div class="btn" style="left:119px;top:606px;width:23px;height:22px"></div>
<div style="left:125px;top:620px;width:1px;height:1px;background:#fff;"></div>
<div style="left:124px;top:619px;width:1px;height:1px;background:#808080;"></div>
<div style="left:129px;top:620px;width:1px;height:1px;background:#fff;"></div>
<div style="left:128px;top:619px;width:1px;height:1px;background:#808080;"></div>
<div style="left:133px;top:620px;width:1px;height:1px;background:#fff;"></div>
<div style="left:132px;top:619px;width:1px;height:1px;background:#808080;"></div>
<div class="inp" style="left:142px;top:606px;width:98px;height:22px;background:#fff"></div>
<div class="inp" style="left:247px;top:610px;width:13px;height:13px;background:#D4D0C8"></div>
<div class="inp" style="left:267px;top:606px;width:74px;height:22px;background:#fff"></div>
<div class="inp" style="left:341px;top:606px;width:46px;height:22px;background:#fff"></div>
<div class="inp" style="left:387px;top:606px;width:54px;height:22px;background:#fff"></div>
<div class="btn" style="left:441px;top:606px;width:23px;height:22px"></div>
<div style="left:447px;top:620px;width:1px;height:1px;background:#fff;"></div>
<div style="left:446px;top:619px;width:1px;height:1px;background:#808080;"></div>
<div style="left:451px;top:620px;width:1px;height:1px;background:#fff;"></div>
<div style="left:450px;top:619px;width:1px;height:1px;background:#808080;"></div>
<div style="left:455px;top:620px;width:1px;height:1px;background:#fff;"></div>
<div style="left:454px;top:619px;width:1px;height:1px;background:#808080;"></div>
<div class="inp" style="left:464px;top:606px;width:75px;height:22px;background:#fff"></div>
<div class="inp" style="left:539px;top:606px;width:49px;height:22px;background:#fff"></div>
<div class="inp" style="left:588px;top:606px;width:96px;height:22px;background:#fff"></div>
<div class="inp" style="left:684px;top:606px;width:71px;height:22px;background:#fff"></div>
<div class="btn" style="left:603px;top:640px;width:108px;height:22px"></div>
<div class="t" style="left:603px;top:645px;font-size:13px;line-height:13px;color:#000;width:108px;text-align:center;">Трубы по л/с</div>
<div class="btn" style="left:559px;top:670px;width:197px;height:23px"></div>
<div class="t" style="left:560px;top:676px;font-size:13.2px;line-height:13.2px;color:#fff;width:197px;text-align:center;">Подключить к существующим</div>
<div class="t" style="left:559px;top:675px;font-size:13.2px;line-height:13.2px;color:#808080;width:197px;text-align:center;">Подключить к существующим</div>
<div class="btn" style="left:299px;top:716px;width:62px;height:23px"></div>
<div class="t" style="left:299px;top:721px;font-size:12.6px;line-height:12.6px;color:#000;width:62px;text-align:center;">OK</div>
<div class="btn" style="left:403px;top:716px;width:62px;height:23px"></div>
<div class="t" style="left:403px;top:721px;font-size:12.3px;line-height:12.3px;color:#000;width:62px;text-align:center;">Отмена</div>
<div class="t" style="left:780px;top:197px;font-size:12.3px;line-height:12.3px;color:#000;width:78px;text-align:center;">Л/С</div>
<div class="t" style="left:859px;top:197px;font-size:12.3px;line-height:12.3px;color:#000;width:78px;text-align:center;">Абонент</div>
<div class="inp" style="left:780px;top:210px;width:79px;height:22px;background:#E9E7E9"></div>
<div class="t" style="left:782px;top:214px;font-size:12.3px;line-height:12.3px;color:#000;">77726583</div>
<div class="inp" style="left:859px;top:210px;width:78px;height:22px;background:#E9E7E9"></div>
<div class="t" style="left:861px;top:214px;font-size:12.3px;line-height:12.3px;color:#000;">77726576</div>
<div class="t" style="left:780px;top:235px;font-size:12.3px;line-height:12.3px;color:#000;width:78px;text-align:center;">Группа</div>
<div class="t" style="left:859px;top:235px;font-size:12.3px;line-height:12.3px;color:#000;width:78px;text-align:center;">Юр. лицо</div>
<div class="inp" style="left:780px;top:247px;width:79px;height:22px;background:#E9E7E9"></div>
<div class="t" style="left:782px;top:251px;font-size:12.3px;line-height:12.3px;color:#000;">61873727</div>
<div class="inp" style="left:859px;top:247px;width:78px;height:22px;background:#E9E7E9"></div>
<div class="t" style="left:861px;top:251px;font-size:12.3px;line-height:12.3px;color:#000;">62463700</div>
<div class="t" style="left:780px;top:272px;font-size:12.3px;line-height:12.3px;color:#000;width:78px;text-align:center;">Дог.</div>
<div class="t" style="left:859px;top:272px;font-size:12.3px;line-height:12.3px;color:#000;width:78px;text-align:center;">Плательщик</div>
<div class="inp" style="left:780px;top:284px;width:79px;height:22px;background:#E9E7E9"></div>
<div class="t" style="left:782px;top:288px;font-size:12.3px;line-height:12.3px;color:#000;">62462131</div>
<div class="inp" style="left:859px;top:284px;width:78px;height:22px;background:#E9E7E9"></div>
<div class="t" style="left:861px;top:288px;font-size:12.3px;line-height:12.3px;color:#000;">57151893</div>
<div class="t" style="left:780px;top:311px;font-size:12.3px;line-height:12.3px;color:#000;width:78px;text-align:center;">Дом</div>
<div class="t" style="left:859px;top:311px;font-size:12.3px;line-height:12.3px;color:#000;width:78px;text-align:center;">Улица</div>
<div class="inp" style="left:780px;top:324px;width:79px;height:22px;background:#E9E7E9"></div>
<div class="t" style="left:782px;top:328px;font-size:12.3px;line-height:12.3px;color:#000;">18334</div>
<div class="inp" style="left:859px;top:324px;width:78px;height:22px;background:#E9E7E9"></div>
<div class="t" style="left:861px;top:328px;font-size:12.3px;line-height:12.3px;color:#000;">1426</div>
<div class="inp" style="left:780px;top:354px;width:158px;height:22px;background:#E9E7E9"></div>
<div class="t" style="left:782px;top:358px;font-size:12.3px;line-height:12.3px;color:#000;">61992182</div>
<div class="btn" style="left:803px;top:410px;width:116px;height:22px"></div>
<div class="t" style="left:803px;top:415px;font-size:12.9px;line-height:12.9px;color:#000;width:116px;text-align:center;">Рассчитать</div>
<div class="btn" style="left:803px;top:443px;width:116px;height:23px"></div>
<div class="t" style="left:803px;top:449px;font-size:12.9px;line-height:12.9px;color:#000;width:116px;text-align:center;">Льготы</div>
<div class="inp" style="left:921px;top:448px;width:13px;height:13px;background:#fff"></div>
<div class="btn" style="left:803px;top:476px;width:116px;height:23px"></div>
<div class="t" style="left:803px;top:482px;font-size:12.9px;line-height:12.9px;color:#000;width:116px;text-align:center;">Операции</div>
<div class="btn" style="left:780px;top:540px;width:159px;height:23px"></div>
<div class="t" style="left:780px;top:546px;font-size:12.7px;line-height:12.7px;color:#000;width:159px;text-align:center;">Очистить поля адр. , дог.</div>
<div class="t" style="left:780px;top:571px;font-size:12.3px;line-height:12.3px;color:#000;width:79px;text-align:center;">Количество</div>
<div class="t" style="left:780px;top:587px;font-size:12.3px;line-height:12.3px;color:#000;width:79px;text-align:center;">жильцов</div>
<div class="t" style="left:859px;top:571px;font-size:12.3px;line-height:12.3px;color:#000;width:79px;text-align:center;">Количество</div>
<div class="t" style="left:859px;top:587px;font-size:12.3px;line-height:12.3px;color:#000;width:79px;text-align:center;">льготников</div>
<div class="inp" style="left:780px;top:600px;width:79px;height:23px;background:#E9E7E9"></div>
<div class="t" style="left:780px;top:604px;font-size:12.3px;line-height:12.3px;color:#000;width:77px;text-align:right;">95</div>
<div class="inp" style="left:859px;top:600px;width:78px;height:23px;background:#E9E7E9"></div>
<div class="t" style="left:859px;top:604px;font-size:12.3px;line-height:12.3px;color:#000;width:76px;text-align:right;">29</div>
<div style="left:455px;top:206px;width:261px;height:270px;background:#D4D0C8;border-style:solid;border-width:1px;border-color:#D4D0C8 #404040 #404040 #D4D0C8;box-shadow:inset 1px 1px #fff,inset -1px -1px #808080"></div>
<div class="t" style="left:474.7px;top:212px;font-size:11.2px;line-height:11.2px;color:#000;">Льготы</div>
<div style="left:459px;top:230px;width:254px;height:1px;background:#808080;"></div>
<div style="left:459px;top:231px;width:254px;height:1px;background:#fff;"></div>
<div style="left:458px;top:235px;width:255px;height:17px;background:#0A246A;"></div>
<div class="t" style="left:474.7px;top:238px;font-size:11.2px;line-height:11.2px;color:#fff;">Квитанция</div>
<div class="t" style="left:474.7px;top:255px;font-size:11.2px;line-height:11.2px;color:#000;">Задолженность</div>
<div class="t" style="left:474.7px;top:272px;font-size:11.2px;line-height:11.2px;color:#000;">Копия лицевого счета</div>
<div class="t" style="left:474.7px;top:289px;font-size:11.2px;line-height:11.2px;color:#000;">Бухгалтерия абонента за год</div>
<div class="t" style="left:474.7px;top:306px;font-size:11.2px;line-height:11.2px;color:#000;">Бухгалтерия абонента за период</div>
<div class="t" style="left:474.7px;top:323px;font-size:11.2px;line-height:11.2px;color:#000;">Данные по счетчикам</div>
<div class="t" style="left:474.7px;top:340px;font-size:11.2px;line-height:11.2px;color:#000;">Лист учета расхода воды по водомерам</div>
<div class="t" style="left:474.7px;top:357px;font-size:11.2px;line-height:11.2px;color:#000;">Справка</div>
<div class="t" style="left:474.7px;top:374px;font-size:11.2px;line-height:11.2px;color:#000;">Справка задолженности</div>
<div class="t" style="left:474.7px;top:391px;font-size:11.2px;line-height:11.2px;color:#000;">Предсудебное предупреждение</div>
<div class="t" style="left:474.7px;top:408px;font-size:11.2px;line-height:11.2px;color:#000;">Расчеты/перерасчеты</div>
<div class="t" style="left:474.7px;top:425px;font-size:11.2px;line-height:11.2px;color:#000;">Суммы льгот (начисление/с-ф/выгружено)</div>
<div class="t" style="left:474.7px;top:442px;font-size:11.2px;line-height:11.2px;color:#000;">Показать извещения о задолженности</div>
<div class="t" style="left:474.7px;top:459px;font-size:11.2px;line-height:11.2px;color:#000;">Показать предсудебные извещения</div>
<svg style="left:6px;top:6px;position:absolute" width="15" height="15" viewBox="0 0 15 15" shape-rendering="crispEdges"><rect x="3" y="0" width="11" height="13" fill="#C8D8F8"/><rect x="3" y="0" width="11" height="1" fill="#303850"/><path d="M7 4L12 9L9 9L9 12L7 12Z" fill="#2030D0" shape-rendering="auto"/><path d="M4 4L1 9L4 9L2 14L7 8L4 8L6 4Z" fill="#F0E040" stroke="#202000" stroke-width="0.6" shape-rendering="auto"/></svg>
<svg style="left:10px;top:77px;position:absolute" width="12" height="13" viewBox="0 0 12 13" shape-rendering="crispEdges"><rect x="0" y="1" width="11" height="11" fill="#9EDCF0"/><rect x="1" y="7" width="4" height="4" fill="#102080"/><circle cx="4" cy="4" r="2.3" fill="#D02040" shape-rendering="auto"/><circle cx="8" cy="8" r="2.3" fill="#A02040" shape-rendering="auto"/><rect x="6" y="2" width="3" height="2" fill="#40A060"/></svg>
<svg style="left:8px;top:47px;position:absolute" width="16" height="16" viewBox="0 0 16 16" shape-rendering="crispEdges"><path d="M0 0H13L15 2V16H0Z" fill="#000"/><rect x="0" y="0" width="14" height="15" fill="#E8E850"/><path d="M0 1h14M0 3h14M0 5h14M0 7h14M0 9h14M0 11h14M0 13h14" stroke="#B8B830" stroke-width="0.6"/><rect x="3" y="0" width="8" height="6" fill="#fff"/><rect x="3" y="9" width="10" height="7" fill="#000"/><rect x="9" y="10" width="2" height="4" fill="#fff"/><rect x="14" y="1" width="1" height="15" fill="#000"/><rect x="0" y="15" width="15" height="1" fill="#000"/></svg>
<svg style="left:30px;top:44px;position:absolute" width="16" height="17" viewBox="0 0 16 17" shape-rendering="crispEdges"><path d="M5.6 12.2A5.5 5.5 0 1 1 10.3 11.8" fill="none" stroke="#003000" stroke-width="3.6" shape-rendering="auto"/><path d="M5.6 12.2A5.5 5.5 0 1 1 10.3 11.8" fill="none" stroke="#30A040" stroke-width="1.4" shape-rendering="auto"/><path d="M2.5 10.5L8.5 11.5L5 15.5Z" fill="#105010" stroke="#002000" stroke-width="0.8" shape-rendering="auto"/></svg>
<svg style="left:59px;top:45px;position:absolute" width="28" height="16" viewBox="0 0 28 16" shape-rendering="crispEdges"><ellipse cx="4" cy="2" rx="4" ry="2" fill="#F0F040" stroke="#000" stroke-width="1" shape-rendering="auto"/><rect x="0" y="2" width="8" height="6" fill="#F0F040"/><path d="M0 2V8M8 2V8M0 4.5H8M0 6.5H8" stroke="#000" stroke-width="1" shape-rendering="auto"/><ellipse cx="4" cy="8" rx="4" ry="1.5" fill="#F0F040" stroke="#000" shape-rendering="auto"/><path d="M11 2Q11 0 13 0Q15 0 15 2Q15 4 13 5V7M13 8V9" stroke="#1020D0" stroke-width="1.5" fill="none" shape-rendering="auto"/><path d="M6 10L8 12H16" stroke="#000" stroke-width="1.5" fill="none" shape-rendering="auto"/><path d="M15 10L18 12L15 14Z" fill="#000"/><rect x="18" y="7" width="10" height="9" fill="#000"/><rect x="19" y="8" width="8" height="2" fill="#2040E0"/><rect x="19" y="10" width="8" height="5" fill="#F0F040"/><rect x="20" y="11" width="6" height="1" fill="#000"/><rect x="20" y="13" width="6" height="1" fill="#000"/></svg>
<svg style="left:94px;top:47px;position:absolute" width="14" height="12" viewBox="0 0 14 12" shape-rendering="crispEdges"><path d="M0.5 6.5L5 11L13.5 1" fill="none" stroke="#500000" stroke-width="2.4" shape-rendering="auto"/><path d="M0.5 6L5 10.2L13.5 0.5" fill="none" stroke="#E01020" stroke-width="1.6" shape-rendering="auto"/></svg>
<svg style="left:118px;top:45px;position:absolute" width="18" height="18" viewBox="0 0 18 18" shape-rendering="crispEdges"><circle cx="9" cy="9" r="6.8" fill="none" stroke="#E00010" stroke-width="2.6" shape-rendering="auto"/><path d="M4.2 4.2L13.8 13.8" stroke="#E00010" stroke-width="2.6" shape-rendering="auto"/></svg>
<svg style="left:150px;top:46px;position:absolute" width="17" height="16" viewBox="0 0 17 16" shape-rendering="crispEdges"><path d="M4.5 1.5H14.5L13 6.5H3Z" fill="#fff" stroke="#000"/><path d="M6 3.5H12M5 5H11" stroke="#000" stroke-width="0.8"/><rect x="0.5" y="6.5" width="15" height="8" rx="2" fill="#A8A0A0" stroke="#000"/><rect x="1" y="9" width="14" height="1" fill="#000"/><rect x="1" y="12" width="14" height="1" fill="#000"/><rect x="3" y="10" width="9" height="2" fill="#B08888"/></svg>
<svg style="left:172px;top:45px;position:absolute" width="19" height="18" viewBox="0 0 19 18" shape-rendering="crispEdges"><path d="M4.5 0.5H15L18.5 4V17.5H4.5Z" fill="#fff" stroke="#000"/><path d="M15 0.5V4H18.5" fill="none" stroke="#000"/><rect x="7" y="13" width="9" height="1" fill="#A0A0C0"/><rect x="7" y="15" width="9" height="1" fill="#A0A0C0"/><path d="M2.5 3L11.5 11.5M11.5 3L2.5 11.5" stroke="#30A040" stroke-width="4.5" shape-rendering="auto"/><path d="M2 2.5L11 11" stroke="#A0F0A0" stroke-width="1" shape-rendering="auto"/></svg>
<svg style="left:203px;top:46px;position:absolute" width="20" height="17" viewBox="0 0 20 17" shape-rendering="crispEdges"><ellipse cx="4" cy="4.5" rx="3.2" ry="2.6" fill="none" stroke="#000" stroke-width="1.5" shape-rendering="auto"/><ellipse cx="4" cy="12.5" rx="3.2" ry="2.6" fill="none" stroke="#000" stroke-width="1.5" shape-rendering="auto"/><path d="M6.5 6L10 8.5M6.5 11L10 8.5" stroke="#000" stroke-width="1.6" shape-rendering="auto"/><path d="M9 8.5L19 1M9 8.5L18 16" stroke="#000" stroke-width="2.2" shape-rendering="auto"/><path d="M10 8.5L19 1.5M10 8.5L18 15.5" stroke="#fff" stroke-width="1.1" shape-rendering="auto"/></svg>
<svg style="left:229px;top:47px;position:absolute" width="17" height="17" viewBox="0 0 17 17" shape-rendering="crispEdges"><path d="M0 0H6L8 2V12H0Z" fill="#fff"/><rect x="1" y="3" width="4" height="1" fill="#909090"/><rect x="1" y="5" width="4" height="1" fill="#909090"/><rect x="1" y="7" width="4" height="1" fill="#909090"/><rect x="1" y="9" width="4" height="1" fill="#909090"/><path d="M5.5 3.5H12.5L15.5 6.5V15.5H5.5Z" fill="#fff" stroke="#000"/><rect x="7" y="6" width="5" height="1" fill="#1818C0"/><rect x="7" y="8" width="6" height="1" fill="#1818C0"/><rect x="7" y="10" width="6" height="1" fill="#1818C0"/><rect x="7" y="12" width="6" height="1" fill="#1818C0"/></svg>
<svg style="left:253px;top:46px;position:absolute" width="16" height="18" viewBox="0 0 16 18" shape-rendering="crispEdges"><rect x="0" y="3" width="11" height="13" fill="#A8A8B0"/><path d="M0 4h11M0 6h11M0 8h11M0 10h11M0 12h11M0 14h11" stroke="#E0E0E8" stroke-width="0.7"/><path d="M3.5 3.5L5 0.5H8L9.5 3.5Z" fill="#F0F040" stroke="#000"/><path d="M7.5 5.5H12.5L15.5 8.5V16.5H7.5Z" fill="#fff" stroke="#000"/><rect x="9" y="8" width="4" height="1" fill="#1818C0"/><rect x="9" y="10" width="5" height="1" fill="#1818C0"/><rect x="9" y="12" width="5" height="1" fill="#1818C0"/><rect x="9" y="14" width="5" height="1" fill="#1818C0"/></svg>
<svg style="left:283px;top:47px;position:absolute" width="17" height="15" viewBox="0 0 17 15" shape-rendering="crispEdges"><rect x="0" y="0" width="16" height="4" fill="#000"/><rect x="1" y="1" width="14" height="2" fill="#fff"/><rect x="6" y="3" width="5" height="12" fill="#003000"/><rect x="2" y="6" width="13" height="5" fill="#003000"/><rect x="7" y="4" width="3" height="10" fill="#20C040"/><rect x="3" y="7" width="11" height="3" fill="#20C040"/></svg>
<svg style="left:306px;top:47px;position:absolute" width="17" height="14" viewBox="0 0 17 14" shape-rendering="crispEdges"><rect x="0" y="0" width="16" height="4" fill="#000"/><rect x="1" y="1" width="14" height="2" fill="#fff"/><path d="M5 5L15 13M15 5L5 13" stroke="#C00010" stroke-width="2.8" shape-rendering="auto"/></svg>
<svg style="left:337px;top:46px;position:absolute" width="20" height="15" viewBox="0 0 20 15" shape-rendering="crispEdges"><rect x="1" y="1" width="3" height="4" fill="#000"/><rect x="8" y="1" width="3" height="4" fill="#000"/><rect x="0" y="4" width="6" height="10" fill="#000"/><rect x="7" y="4" width="6" height="10" fill="#000"/><rect x="4" y="5" width="5" height="4" fill="#000"/><rect x="1" y="8" width="2" height="5" fill="#fff"/><rect x="8" y="8" width="2" height="5" fill="#fff"/><path d="M15 1Q15 0 17 0Q19 0 18 2L17 3V4" stroke="#000" stroke-width="0.9" fill="none" shape-rendering="auto"/></svg>
<svg style="left:364px;top:48px;position:absolute" width="10" height="12" viewBox="0 0 10 12" shape-rendering="crispEdges"><path d="M5 0L10 5H7V12H3V5H0Z" fill="#000"/></svg>
<svg style="left:388px;top:48px;position:absolute" width="10" height="12" viewBox="0 0 10 12" shape-rendering="crispEdges"><path d="M5 12L10 7H7V0H3V7H0Z" fill="#000"/></svg>
<svg style="left:415px;top:45px;position:absolute" width="15" height="16" viewBox="0 0 15 16" shape-rendering="crispEdges"><ellipse cx="7.5" cy="2.5" rx="7" ry="2.3" fill="#6A7030" stroke="#000" shape-rendering="auto"/><path d="M1 3L3 15H12L14 3Z" fill="#7A8038" stroke="#000" shape-rendering="auto"/><rect x="3" y="5" width="2" height="8" fill="#fff"/><rect x="6" y="5" width="1" height="8" fill="#fff"/><rect x="9" y="5" width="1" height="8" fill="#E0E0D0"/></svg>
<svg style="left:443px;top:46px;position:absolute" width="15" height="15" viewBox="0 0 15 15" shape-rendering="crispEdges"><rect x="0" y="2" width="14" height="13" fill="#000"/><rect x="1" y="3" width="12" height="11" fill="#A0A060"/><rect x="3" y="4" width="8" height="9" fill="#fff" stroke="#000" stroke-width="1"/><rect x="4" y="0" width="6" height="3" fill="#E0E060" stroke="#000" stroke-width="1"/><rect x="5" y="6" width="4" height="1" fill="#2020C0"/><rect x="5" y="8" width="4" height="1" fill="#2020C0"/><rect x="5" y="10" width="4" height="1" fill="#2020C0"/></svg>
<svg style="left:470px;top:47px;position:absolute" width="17" height="15" viewBox="0 0 17 15" shape-rendering="crispEdges"><path d="M6 2H13L16 5V15H6Z" fill="#fff" stroke="#000"/><rect x="9" y="5" width="5" height="1" fill="#000"/><rect x="9" y="8" width="5" height="1" fill="#000"/><rect x="9" y="11" width="5" height="1" fill="#000"/><path d="M1 1L11 11" stroke="#000" stroke-width="4" shape-rendering="auto"/><path d="M1 1L11 11" stroke="#F0E050" stroke-width="2.4" shape-rendering="auto"/><circle cx="2" cy="2" r="1.8" fill="#E02020" shape-rendering="auto"/></svg>
<svg style="left:498px;top:46px;position:absolute" width="17" height="17" viewBox="0 0 17 17" shape-rendering="crispEdges"><rect x="0.5" y="0.5" width="11" height="10" rx="1.5" fill="#B8C4C8" stroke="#000" stroke-width="1.3"/><rect x="3" y="1.5" width="6" height="7" fill="#fff" stroke="#000" stroke-width="0.8"/><path d="M4.5 3V8M4.5 3H7.5M4.5 5H7" stroke="#E02030" stroke-width="1.4"/><rect x="4.5" y="5.5" width="11" height="10" rx="1.5" fill="#B8C4C8" stroke="#000" stroke-width="1.3"/><rect x="6.5" y="6.5" width="7" height="8" fill="#fff" stroke="#000" stroke-width="0.8"/><path d="M8 8V13.5M8 8.5H10.5M8 10.5H10M12 8V13.5" stroke="#D01020" stroke-width="1.3"/></svg>
<svg style="left:534px;top:50px;position:absolute" width="9" height="13" viewBox="0 0 9 13" shape-rendering="crispEdges"><path d="M1.5 3.5Q1.5 1 4.5 1Q7.5 1 7.5 3.5Q7.5 5 5.5 6Q4.5 6.8 4.5 8.5" stroke="#0010D0" stroke-width="2" fill="none" shape-rendering="auto"/><rect x="3" y="10" width="3" height="3" fill="#0010D0"/></svg>
<svg style="left:556px;top:46px;position:absolute" width="12" height="15" viewBox="0 0 12 15" shape-rendering="crispEdges"><rect x="0" y="0" width="12" height="15" fill="#000"/><rect x="2" y="1" width="9" height="12" fill="#E8E8E8"/><path d="M0 0H7V15H0Z" fill="#E01010"/><rect x="0" y="0" width="1" height="15" fill="#600000"/><rect x="5" y="7" width="1" height="1" fill="#fff"/><rect x="7" y="13" width="5" height="2" fill="#000"/></svg>
<svg style="left:588px;top:46px;position:absolute" width="14" height="15" viewBox="0 0 14 15" shape-rendering="crispEdges"><path d="M12 6Q14 8 12 10L4 11Q2 11 2 13V15" stroke="#000" stroke-width="2" fill="none" shape-rendering="auto"/><path d="M12 6Q14 8 12 10L4 11Q2 11 2 13V15" stroke="#E0C040" stroke-width="0.8" fill="none" shape-rendering="auto"/><circle cx="8.5" cy="4.5" r="3.5" fill="#1020E0" shape-rendering="auto"/><rect x="0" y="2" width="6" height="2" fill="#20C0F0"/><rect x="0" y="5" width="6" height="2" fill="#20C0F0"/></svg>
<svg style="left:158px;top:424px;position:absolute" width="16" height="15" viewBox="0 0 16 15" shape-rendering="crispEdges"><path d="M0.5 3.5H4.5L5.5 4.5H11.5V13.5H0.5Z" fill="#F4F488" stroke="#303000"/><path d="M0.5 13.5L3 8.5H14.5L11.5 13.5Z" fill="#E8E860" stroke="#101000" shape-rendering="auto"/><path d="M2 12h9M3 10h10" stroke="#B8B840" stroke-width="0.7"/><path d="M8 2Q10.5 0 13 1.5" stroke="#000" stroke-width="1.3" fill="none" shape-rendering="auto"/><path d="M11.5 1L14.5 1L13.5 4.5Z" fill="#000" shape-rendering="auto"/></svg>
<svg style="left:915px;top:78px;position:absolute" width="16" height="14" viewBox="0 0 16 14" shape-rendering="crispEdges"><rect x="4" y="9" width="6" height="2" fill="#000"/></svg>
<svg style="left:931px;top:78px;position:absolute" width="16" height="14" viewBox="0 0 16 14" shape-rendering="crispEdges"><rect x="3" y="2" width="9" height="9" fill="none" stroke="#000" stroke-width="1"/><rect x="3" y="2" width="9" height="2" fill="#000"/></svg>
<svg style="left:949px;top:78px;position:absolute" width="16" height="14" viewBox="0 0 16 14" shape-rendering="crispEdges"><path d="M4 3L11 10M11 3L4 10" stroke="#000" stroke-width="1.6" shape-rendering="auto"/></svg>
<svg style="left:716px;top:460px;position:absolute" width="11" height="19" viewBox="0 0 11 19" shape-rendering="crispEdges"><rect x="2" y="6" width="1" height="8" fill="#505050"/><path d="M8.5 5.5V13.5L4 9.5Z" fill="#505050" shape-rendering="auto"/></svg>
<svg style="left:727px;top:460px;position:absolute" width="12" height="19" viewBox="0 0 12 19" shape-rendering="crispEdges"><path d="M8.5 5.5V13.5L4.5 9.5Z" fill="#505050" shape-rendering="auto"/></svg>
<svg style="left:739px;top:460px;position:absolute" width="12" height="19" viewBox="0 0 12 19" shape-rendering="crispEdges"><path d="M3.5 5.5V13.5L7.5 9.5Z" fill="#000" shape-rendering="auto"/></svg>
<svg style="left:751px;top:460px;position:absolute" width="12" height="19" viewBox="0 0 12 19" shape-rendering="crispEdges"><path d="M3 5.5V13.5L7.5 9.5Z" fill="#000" shape-rendering="auto"/><rect x="8" y="6" width="1" height="8" fill="#000"/></svg>
</body></html>
